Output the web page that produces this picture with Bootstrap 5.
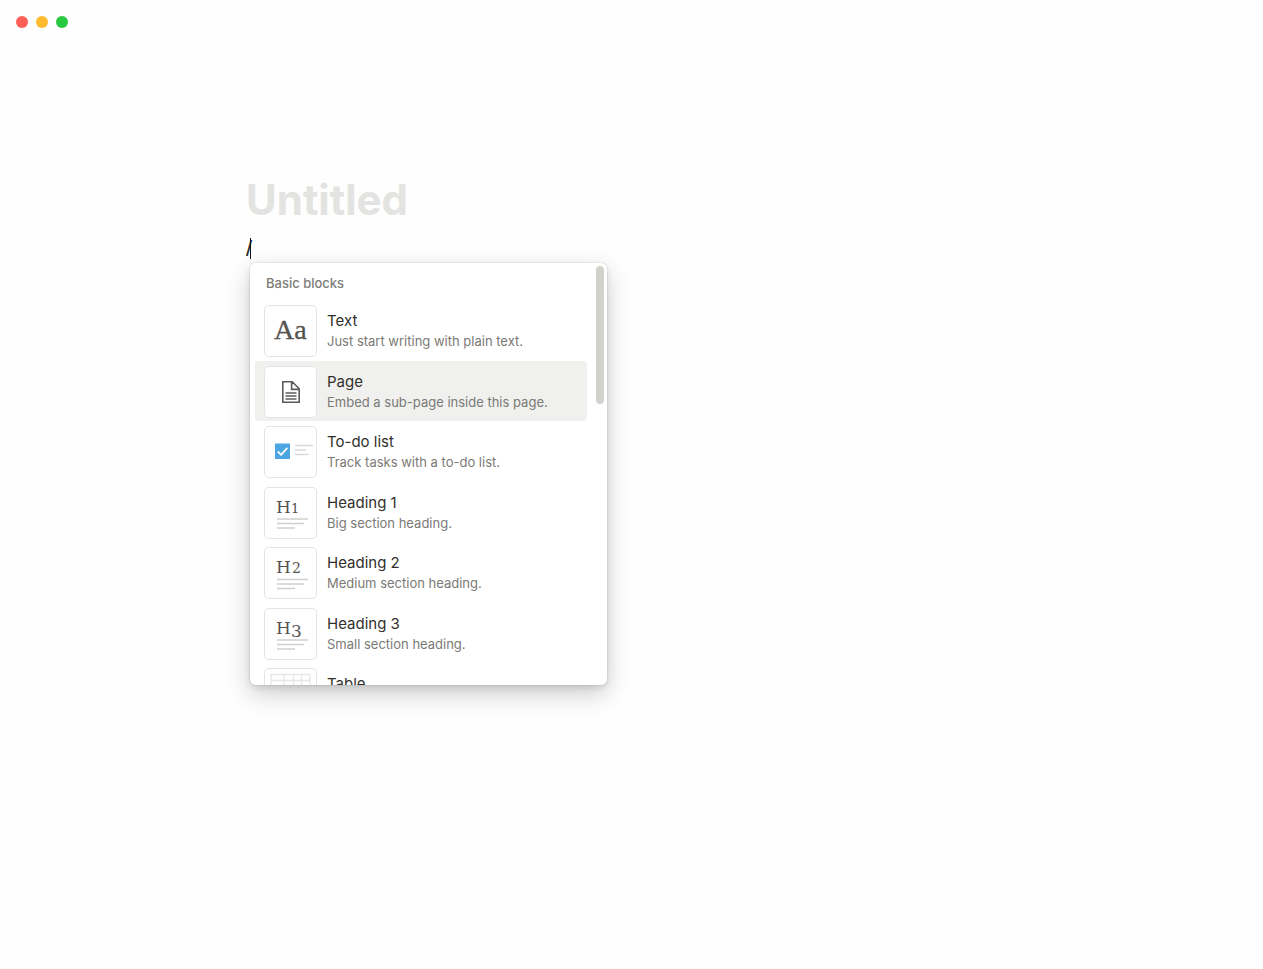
<!DOCTYPE html>
<html lang="en">
<head>
<meta charset="utf-8">
<meta name="viewport" content="width=device-width, initial-scale=1">
<title>Untitled</title>
<link href="https://cdn.jsdelivr.net/npm/bootstrap@5.3.0/dist/css/bootstrap.min.css" rel="stylesheet">
<style>
  body { font-family: Inter, "Liberation Sans", sans-serif; background: #fefefe; color: #37352f; }
  .window-bar { height: 44px; padding: 0 16px; }
  .light { width: 12px; height: 12px; border: 0; padding: 0; }
  .light-close { background: #fe5f57; }
  .light-min { background: #febb2e; }
  .light-max { background: #28c840; }
  .editor { padding: 130px 246px 60px; }
  .page-title { font-size: 42px; line-height: 52px; height: 52px; font-weight: 700; outline: 0; }
  .page-title::placeholder { color: #e3e3e1; opacity: 1; }
  .block-line { margin-top: 12px; height: 21px; }
  .block-input { font-family: "Liberation Sans", sans-serif; font-size: 22px; line-height: 21px; height: 21px; color: #222; outline: 0; caret-color: transparent; }
  .caret { left: 4px; top: 0; width: 1px; height: 21px; background: #111; }
  .slash-menu { width: 357px; height: 422px; margin: 4px 0 0 4px; border-radius: 6px; background: #fff;
    box-shadow: 0 0 0 1px rgba(15,15,15,.05), 0 3px 6px rgba(15,15,15,.1), 0 9px 24px rgba(15,15,15,.2); }
  .menu-label { font-size: 13px; line-height: 17px; font-weight: 500; color: #7d7c78; padding: 12px 16px 8px; margin: 0; }
  .block-list { display: grid; grid-auto-rows: 61px 60px; margin: 0 20px 0 5px; --bs-list-group-bg: transparent; }
  .block-item { border: 0; border-radius: 4px !important; padding: 5px 9px 0; gap: 10px; background: transparent; color: #32302c; }
  .block-item.current { background: #f0f0ee; }
  .tile { width: 53px; height: 52px; flex: none; background: #fff; border-radius: 5px; box-shadow: inset 0 0 0 1px #e4e4e3; }
  .item-text { padding-top: 6px; white-space: nowrap; }
  .item-name { font-size: 15px; line-height: 20px; }
  .item-note { font-size: 13px; line-height: 21px; color: #7b7a76; }
  .tile-glyph { fill: #555350; font-family: "DejaVu Serif", serif; }
  .thumb { top: 3px; right: 3px; width: 8px; height: 138px; border-radius: 4px; background: #d2d2cd; }
</style>
</head>
<body class="min-vh-100">
<header class="window-bar d-flex align-items-center gap-2">
  <button class="light light-close rounded-circle" aria-label="Close"></button>
  <button class="light light-min rounded-circle" aria-label="Minimize"></button>
  <button class="light light-max rounded-circle" aria-label="Zoom"></button>
</header>

<main class="editor">
  <input class="page-title d-block w-100 border-0 bg-transparent p-0" type="text" placeholder="Untitled" aria-label="Page title">
  <div class="block-line position-relative">
    <input class="block-input d-block w-100 border-0 bg-transparent p-0" type="text" value="/" aria-label="Block text">
    <span class="caret position-absolute"></span>
  </div>

  <section class="slash-menu position-relative overflow-hidden">
    <h2 class="menu-label">Basic blocks</h2>
    <div class="block-list list-group">
      <button class="block-item list-group-item list-group-item-action d-flex align-items-start">
        <svg class="tile" viewBox="0 0 53 52"><text x="10" y="34" font-family="Liberation Serif, serif" font-size="28" fill="#555350" stroke="#555350" stroke-width=".3">Aa</text></svg>
        <span class="item-text"><span class="item-name d-block">Text</span><span class="item-note d-block">Just start writing with plain text.</span></span>
      </button>
      <button class="block-item current list-group-item list-group-item-action d-flex align-items-start">
        <svg class="tile" viewBox="0 0 53 52" fill="none" stroke="#5c5b58" stroke-width="1.6"><path d="M18.800 15.800h9.400l7 7v13.400h-16.400zM27.600 15.800v7.600h7.600M21.500 27h11M21.500 30h11M21.500 33h11"/></svg>
        <span class="item-text"><span class="item-name d-block">Page</span><span class="item-note d-block">Embed a sub-page inside this page.</span></span>
      </button>
      <button class="block-item list-group-item list-group-item-action d-flex align-items-start">
        <svg class="tile" viewBox="0 0 53 52" fill="none"><rect x="11" y="17.500" width="15" height="15.500" fill="#4ba6e3"/><path d="M13.800 25.500l3.300 3.300 6.200-7" stroke="#fff" stroke-width="1.800"/><path d="M31 19.500h18M31 24h11M31 28.500h13.500" stroke="#d9d9d8" stroke-width="1.300"/></svg>
        <span class="item-text"><span class="item-name d-block">To-do list</span><span class="item-note d-block">Track tasks with a to-do list.</span></span>
      </button>
      <button class="block-item list-group-item list-group-item-action d-flex align-items-start">
        <svg class="tile" viewBox="0 0 53 52"><text class="tile-glyph" x="12" y="26" font-size="17">H</text><text class="tile-glyph" x="27" y="26" font-size="13">1</text><path d="M13 32h31M13 36.500h27M13 41h18" stroke="#cfcfcd" stroke-width="1.300"/></svg>
        <span class="item-text"><span class="item-name d-block">Heading 1</span><span class="item-note d-block">Big section heading.</span></span>
      </button>
      <button class="block-item list-group-item list-group-item-action d-flex align-items-start">
        <svg class="tile" viewBox="0 0 53 52"><text class="tile-glyph" x="12" y="26" font-size="17">H</text><text class="tile-glyph" x="28" y="26" font-size="14">2</text><path d="M13 32.500h31M13 37h27M13 41.500h18" stroke="#cfcfcd" stroke-width="1.300"/></svg>
        <span class="item-text"><span class="item-name d-block">Heading 2</span><span class="item-note d-block">Medium section heading.</span></span>
      </button>
      <button class="block-item list-group-item list-group-item-action d-flex align-items-start">
        <svg class="tile" viewBox="0 0 53 52"><text class="tile-glyph" x="12" y="26" font-size="17">H</text><text class="tile-glyph" x="27" y="29" font-size="17">3</text><path d="M13 32h31M13 36.500h27M13 41h18" stroke="#cfcfcd" stroke-width="1.300"/></svg>
        <span class="item-text"><span class="item-name d-block">Heading 3</span><span class="item-note d-block">Small section heading.</span></span>
      </button>
      <button class="block-item list-group-item list-group-item-action d-flex align-items-start">
        <svg class="tile" viewBox="0 0 53 52" fill="none" stroke="#e6e6e5" stroke-width="1.300"><path d="M7 6.500h39v39h-39zM7 12.500h39M7 22.500h39M7 33h39M20 6.500v39M29.500 6.500v39M37.500 6.500v39"/></svg>
        <span class="item-text"><span class="item-name d-block">Table</span></span>
      </button>
    </div>
    <span class="thumb position-absolute"></span>
  </section>
</main>
<script src="https://cdn.jsdelivr.net/npm/bootstrap@5.3.0/dist/js/bootstrap.bundle.min.js"></script>
</body>
</html>
